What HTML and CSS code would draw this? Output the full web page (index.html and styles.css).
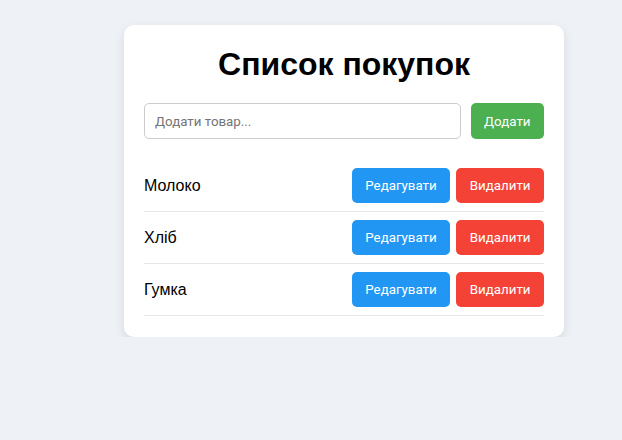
FILE: index.html
```html
<!DOCTYPE html>
<html lang="uk">
<head>
<meta charset="utf-8">
<link rel="stylesheet" href="styles.css">
</head>
<body>
<div class="card">
  <h1 class="title">Список покупок</h1>
  <div class="add-row">
    <input class="add-input" type="text" placeholder="Додати товар...">
    <button class="btn btn-add">Додати</button>
  </div>
  <ul class="list">
    <li class="item"><span class="name">Молоко</span><div class="actions"><button class="btn btn-edit">Редагувати</button><button class="btn btn-del">Видалити</button></div></li>
    <li class="item"><span class="name">Хліб</span><div class="actions"><button class="btn btn-edit">Редагувати</button><button class="btn btn-del">Видалити</button></div></li>
    <li class="item"><span class="name">Гумка</span><div class="actions"><button class="btn btn-edit">Редагувати</button><button class="btn btn-del">Видалити</button></div></li>
  </ul>
</div>
</body>
</html>
```
FILE: styles.css
```css
html, body {
  margin: 0;
  padding: 0;
  background: #eef2f7;
  font-family: "Liberation Sans", Arial, sans-serif;
}
body {
  padding: 25px 0 0 124px;
}
.card {
  width: 400px;
  padding: 20px 20px 21px;
  background: #fff;
  border-radius: 10px;
  box-shadow: 0 4px 12px rgba(0,0,0,0.1);
}
.title {
  margin: 0 0 20px;
  text-align: center;
  font-size: 32px;
  line-height: 38px;
  font-weight: bold;
  color: #000;
}
.add-row {
  display: flex;
  gap: 10px;
}
.add-input {
  flex: 1;
  height: 36px;
  box-sizing: border-box;
  padding: 8px 10px;
  border: 1px solid #ccc;
  border-radius: 5px;
  font-family: Roboto, sans-serif;
  font-size: 13.333px;
  color: #333;
  margin: 0;
}
.add-input::placeholder { color: #757575; }
.btn {
  border: none;
  border-radius: 5px;
  color: #fff;
  font-family: Roboto, sans-serif;
  font-size: 13.333px;
  font-weight: 400;
  padding: 0 13.5px;
  height: 35px;
  cursor: pointer;
  margin: 0;
}
.btn-add {
  background: #4caf50;
  height: 36px;
}
.btn-edit { background: #2196f3; }
.btn-del { background: #f44336; }
.list {
  list-style: none;
  margin: 21px 0 0;
  padding: 0;
}
.item {
  display: flex;
  align-items: center;
  justify-content: space-between;
  padding: 8px 0;
  border-bottom: 1px solid #e6e6e6;
}
.name {
  font-size: 16px;
  color: #000;
}
.actions {
  display: flex;
  gap: 6px;
}
```
